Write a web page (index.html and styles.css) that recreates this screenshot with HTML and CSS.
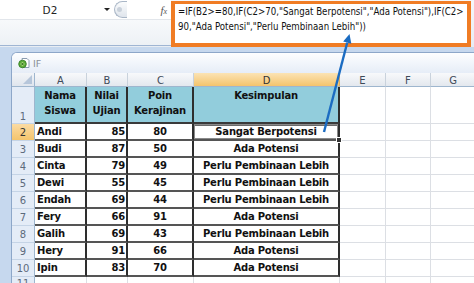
FILE: index.html
```html
<!DOCTYPE html>
<html>
<head>
<meta charset="utf-8">
<link rel="stylesheet" href="styles.css">
</head>
<body>
<div class="app">
  <div class="fbar">
    <div class="fbar-left">
      <div class="fbar-top">
        <div class="namebox">D2</div>
        <div class="dd"></div>
        <div class="pill"><div class="pill-dot"></div></div>
        <div class="spacer"></div>
        <div class="fx">f<span class="fx-x">x</span></div>
      </div>
      <div class="fbar-under"></div>
      <div class="fbar-line"></div>
    </div>
    <div class="formula">
      <div class="fline">=IF(B2&gt;=80,IF(C2&gt;70,"Sangat Berpotensi","Ada Potensi"),IF(C2&gt;</div>
      <div class="fline">90,"Ada Potensi","Perlu Pembinaan Lebih"))</div>
    </div>
  </div>
  <div class="desk">
    <div class="window">
      <div class="wtitle">
        <svg class="wicon" width="12" height="12" viewBox="0 0 12 12">
          <path d="M4 1.5h5l2 2v7h-7z" fill="#fff" stroke="#8a9bb0" stroke-width="1"/>
          <circle cx="4.5" cy="7" r="3.8" fill="#5fae3a" stroke="#2f7a20" stroke-width="0.8"/>
          <circle cx="4.5" cy="7" r="2" fill="#a9dd7a"/>
          <path d="M3.3 5.6l2.4 2.8M5.7 5.6l-2.4 2.8" stroke="#1f5f14" stroke-width="0.9"/>
        </svg>
        <span class="wname">IF</span>
      </div>
      <div class="sheet">
        <div class="corner"><div class="tri"></div></div>
        <div class="ch">A</div>
        <div class="ch">B</div>
        <div class="ch">C</div>
        <div class="ch ch-sel">D</div>
        <div class="ch">E</div>
        <div class="ch">F</div>
        <div class="ch">G</div>

        <div class="rh rh1">1</div>
        <div class="hd">Nama<br>Siswa</div>
        <div class="hd">Nilai<br>Ujian</div>
        <div class="hd">Poin<br>Kerajinan</div>
        <div class="hd">Kesimpulan</div>
        <div class="e"></div><div class="e"></div><div class="e"></div>

        <div class="rh rh-sel">2</div>
        <div class="d l">Andi</div><div class="d r">85</div><div class="d m">80</div>
        <div class="d m sel">Sangat Berpotensi<div class="handle"></div></div>
        <div class="e"></div><div class="e"></div><div class="e"></div>

        <div class="rh">3</div>
        <div class="d l">Budi</div><div class="d r">87</div><div class="d m">50</div><div class="d m">Ada Potensi</div>
        <div class="e"></div><div class="e"></div><div class="e"></div>

        <div class="rh">4</div>
        <div class="d l">Cinta</div><div class="d r">79</div><div class="d m">49</div><div class="d m">Perlu Pembinaan Lebih</div>
        <div class="e"></div><div class="e"></div><div class="e"></div>

        <div class="rh">5</div>
        <div class="d l">Dewi</div><div class="d r">55</div><div class="d m">45</div><div class="d m">Perlu Pembinaan Lebih</div>
        <div class="e"></div><div class="e"></div><div class="e"></div>

        <div class="rh">6</div>
        <div class="d l">Endah</div><div class="d r">69</div><div class="d m">44</div><div class="d m">Perlu Pembinaan Lebih</div>
        <div class="e"></div><div class="e"></div><div class="e"></div>

        <div class="rh">7</div>
        <div class="d l">Fery</div><div class="d r">66</div><div class="d m">91</div><div class="d m">Ada Potensi</div>
        <div class="e"></div><div class="e"></div><div class="e"></div>

        <div class="rh">8</div>
        <div class="d l">Galih</div><div class="d r">69</div><div class="d m">43</div><div class="d m">Perlu Pembinaan Lebih</div>
        <div class="e"></div><div class="e"></div><div class="e"></div>

        <div class="rh">9</div>
        <div class="d l">Hery</div><div class="d r">91</div><div class="d m">66</div><div class="d m">Ada Potensi</div>
        <div class="e"></div><div class="e"></div><div class="e"></div>

        <div class="rh">10</div>
        <div class="d l">Ipin</div><div class="d r">83</div><div class="d m">70</div><div class="d m">Ada Potensi</div>
        <div class="e"></div><div class="e"></div><div class="e"></div>

        <div class="rh rh11">11</div>
        <div class="e"></div><div class="e"></div><div class="e"></div><div class="e"></div>
        <div class="e"></div><div class="e"></div><div class="e"></div>
      </div>
    </div>
  </div>
  <svg class="arrow" width="474" height="283" viewBox="0 0 474 283">
    <line x1="324" y1="132" x2="347.2" y2="42.7" stroke="#1b6cc2" stroke-width="2.4"/>
    <polygon points="349.5,34 351.3,43.7 343.2,41.6" fill="#1b6cc2"/>
  </svg>
</div>
</body>
</html>
```

FILE: styles.css
```css
body {
  margin: 0;
}

.app {
  position: relative;
  width: 474px;
  height: 283px;
  overflow: hidden;
  background: #c6d8ee;
  font-family: "DejaVu Sans", sans-serif;
}

/* formula bar */
.fbar {
  display: flex;
  height: 47px;
  background: linear-gradient(#f5f7fa, #e8edf3);
}

.fbar-left {
  width: 171px;
  display: flex;
  flex-direction: column;
}

.fbar-top {
  height: 20px;
  display: flex;
  align-items: center;
  background: #fff;
  border-bottom: 1px solid #e2e6eb;
  box-sizing: border-box;
}

.namebox {
  width: 100px;
  text-align: center;
  font-size: 10.5px;
  color: #222;
}

.dd {
  margin-left: 4px;
  width: 0;
  height: 0;
  border-left: 3px solid transparent;
  border-right: 3px solid transparent;
  border-top: 3px solid #222;
}

.pill {
  margin-left: 4px;
  width: 13px;
  height: 17px;
  box-sizing: border-box;
  border: 1px solid #aab7c7;
  border-right: none;
  border-radius: 9px 0 0 9px;
  background: linear-gradient(#fbfcfd, #dfe5ec);
  display: flex;
  align-items: center;
  padding-left: 2px;
}

.pill-dot {
  width: 5px;
  height: 5px;
  border-radius: 50%;
  background: #c9d1db;
}

.spacer {
  flex: 1;
}

.fx {
  margin-right: 4px;
  font-family: "Liberation Serif", serif;
  font-style: italic;
  font-size: 11px;
  color: #555;
}

.fx-x {
  font-size: 8px;
}

.fbar-under {
  flex: 1;
  background: linear-gradient(#f7f9fb, #edf1f5);
}

.fbar-line {
  height: 1px;
  margin-bottom: 1px;
  background: #9fb5d3;
}

.formula {
  margin: 1px 3px 0 0;
  width: 300px;
  height: 46px;
  box-sizing: border-box;
  border: 4px solid #f07c24;
  border-top-width: 3px;
  background: #fff;
  padding-left: 3px;
  font-family: "DejaVu Sans Condensed", "DejaVu Sans", sans-serif;
  font-stretch: condensed;
  font-size: 9.6px;
  line-height: 15px;
  color: #111;
  white-space: nowrap;
}

/* desktop and workbook window */
.desk {
  padding: 5px 0 0 11px;
}

.window {
  background: #fff;
  border-left: 1px solid #8da7c9;
  border-top: 1px solid #8da7c9;
  border-top-left-radius: 6px;
  overflow: hidden;
}

.wtitle {
  height: 20px;
  display: flex;
  align-items: center;
  gap: 3px;
  padding-left: 6px;
  background: linear-gradient(#fdfeff, #e6edf7);
}

.wname {
  font-size: 9.5px;
  color: #8a8f96;
}

/* sheet grid */
.sheet {
  display: grid;
  grid-template-columns: 23px 52px 41px 66px 146px 46px 45px 45px;
  grid-template-rows: 14px 37px repeat(11, 17px);
  font-size: 10px;
}

.sheet > div {
  box-sizing: border-box;
}

.corner {
  background: linear-gradient(#f3f5f8, #dfe5ed);
  border-right: 1px solid #9eb6ce;
  border-bottom: 1px solid #9eb6ce;
  position: relative;
}

.tri {
  position: absolute;
  right: 2px;
  bottom: 2px;
  width: 0;
  height: 0;
  border-left: 9px solid transparent;
  border-bottom: 9px solid #b6c6da;
}

.ch {
  background: linear-gradient(#f8f9fb, #e3e8ee);
  border-right: 1px solid #c9d2dc;
  border-bottom: 1px solid #9eb6ce;
  color: #3e4a58;
  text-align: center;
  line-height: 14px;
  padding-top: 1px;
}

.ch-sel {
  background: linear-gradient(#fbe3b4, #f4c46c);
  color: #333;
  border-right-color: #e0b060;
}

.rh {
  background: #e4ecf7;
  border-right: 1px solid #9eb6ce;
  border-bottom: 1px solid #c5d4e6;
  color: #5d6b7c;
  display: flex;
  align-items: center;
  justify-content: center;
}

.rh1 {
  align-items: flex-end;
  padding-bottom: 1px;
}

.rh11 {
  align-items: flex-start;
  line-height: 10px;
  padding-top: 2px;
}

.rh-sel {
  background: linear-gradient(#fbdba3, #f4c46c);
  color: #333;
}

.hd {
  background: #92cddc;
  border-right: 2px solid #2e2e2e;
  border-bottom: 2px solid #3a3a3a;
  font-weight: bold;
  color: #111;
  text-align: center;
  line-height: 15px;
  padding-top: 1px;
  letter-spacing: -0.2px;
}

.d {
  display: flex;
  align-items: center;
  font-weight: bold;
  color: #111;
  white-space: nowrap;
  letter-spacing: -0.2px;
  border-right: 2px solid #2e2e2e;
  border-bottom: 2px solid #555;
}

.l {
  justify-content: flex-start;
  padding-left: 2px;
}

.r {
  justify-content: flex-end;
  padding-right: 1px;
}

.m {
  justify-content: center;
}

.sel {
  position: relative;
  box-shadow: inset 0 0 0 1px #8a8a8a, inset 0 2px 0 0 #6a6a6a;
}

.handle {
  position: absolute;
  right: -4px;
  bottom: -4px;
  width: 4px;
  height: 4px;
  background: #333;
  border: 1px solid #fff;
}

.e {
  border-right: 1px solid #dcdfe4;
  border-bottom: 1px solid #dcdfe4;
}

.arrow {
  position: absolute;
  left: 0;
  top: 0;
  pointer-events: none;
}
```
